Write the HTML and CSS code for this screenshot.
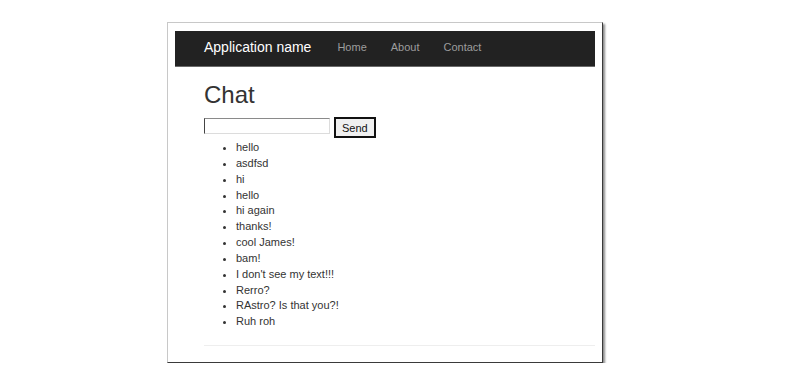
FILE: index.html
```html
<!DOCTYPE html>
<html lang="en">
<head>
    <meta charset="UTF-8">
    <meta name="viewport" content="width=device-width, initial-scale=1.0">
    <title>Chat</title>
    <link rel="stylesheet" href="styles.css">
</head>
<body>
    <div class="window">
        <div class="navbar">
            <a class="brand" href="#">Application name</a>
            <ul class="nav-links">
                <li><a href="#">Home</a></li>
                <li><a href="#">About</a></li>
                <li><a href="#">Contact</a></li>
            </ul>
        </div>

        <div class="container">
            <h1>Chat</h1>

            <div class="chat-form">
                <input type="text" class="message-box" id="message">
                <button class="btn-send">Send</button>
            </div>

            <ul class="messages">
                <li>hello</li>
                <li>asdfsd</li>
                <li>hi</li>
                <li>hello</li>
                <li>hi again</li>
                <li>thanks!</li>
                <li>cool James!</li>
                <li>bam!</li>
                <li>I don't see my text!!!</li>
                <li>Rerro?</li>
                <li>RAstro? Is that you?!</li>
                <li>Ruh roh</li>
            </ul>

            <hr>
        </div>
    </div>
</body>
</html>
```

FILE: styles.css
```css
* {
    margin: 0;
    padding: 0;
    box-sizing: border-box;
}

body {
    font-family: 'Liberation Sans', Arial, sans-serif;
    background: #fff;
    color: #333;
}

.window {
    width: 436px;
    height: 341px;
    margin: 22px 0 0 167px;
    padding: 8px 7px 0 7px;
    background: #fff;
    border: 1px solid #c8c8c8;
    border-right-color: #3a3a3a;
    border-bottom-color: #3a3a3a;
    box-shadow: 2px 2px 2px rgba(0,0,0,0.45);
}

.navbar {
    height: 36px;
    background: #222;
    border-bottom: 1px solid #6a6a6a;
    display: flex;
    align-items: center;
    padding: 0 0 4px 29px;
}

.brand {
    color: #fff;
    font-size: 14px;
    text-decoration: none;
    margin-right: 14px;
}

.nav-links {
    list-style: none;
    display: flex;
}

.nav-links a {
    display: block;
    padding: 0 12px;
    color: #9d9d9d;
    font-size: 11px;
    text-decoration: none;
}

.container {
    padding-left: 29px;
}

h1 {
    font-size: 24px;
    font-weight: normal;
    line-height: 26px;
    margin: 15px 0 9px;
}

.chat-form {
    display: flex;
    align-items: flex-start;
    gap: 4px;
}

.message-box {
    width: 126px;
    height: 16px;
    margin-top: 1px;
    border: 1px solid #dcdcdc;
    border-top-color: #8a8a8a;
    border-left-color: #444;
    font-family: inherit;
    font-size: 11px;
    outline: none;
}

.btn-send {
    height: 21px;
    padding: 0 6px;
    border: 2px solid #111;
    background: #f0f0f0;
    color: #111;
    font-family: inherit;
    font-size: 11px;
}

.messages {
    margin-top: 2px;
    padding-left: 32px;
    font-size: 11px;
    line-height: 15.85px;
    color: #333;
}

hr {
    margin-top: 15px;
    border: none;
    border-top: 1px solid #eee;
}
```
